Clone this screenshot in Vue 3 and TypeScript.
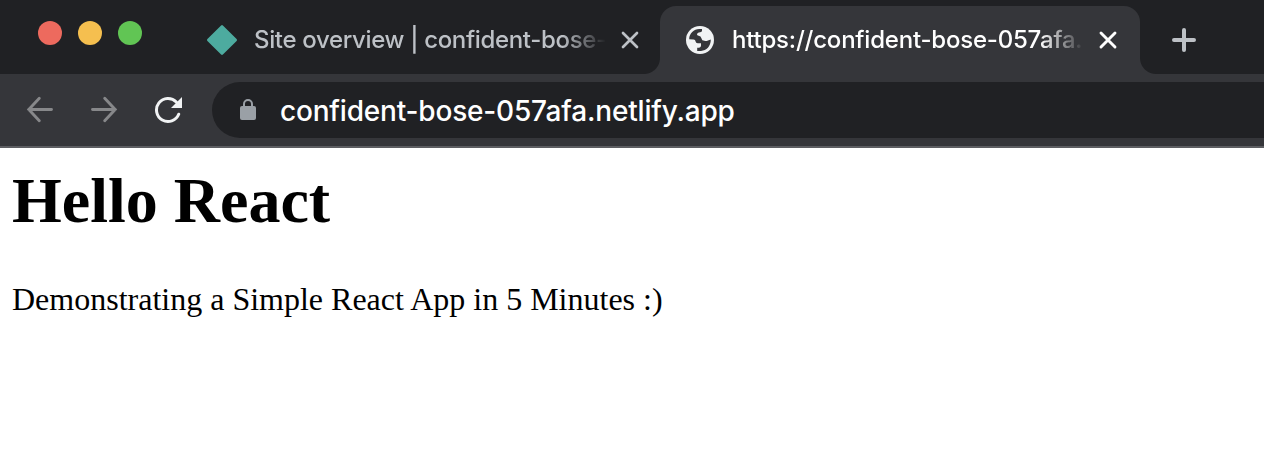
<script setup lang="ts">
const lights: string[] = ['red', 'yellow', 'green']
const address = 'confident-bose-057afa.netlify.app'
</script>

<template>
  <div class="window">
    <header class="strip">
      <div class="lights">
        <i v-for="light in lights" :key="light" class="light" :class="light"></i>
      </div>
      <div class="tab">
        <svg class="netlify" width="32" height="32" viewBox="0 0 32 32">
          <path d="M15.1 1.4Q16 .5 16.9 1.4L30.6 15.1Q31.5 16 30.6 16.9L16.9 30.6Q16 31.5 15.1 30.6L1.4 16.9Q.5 16 1.4 15.1Z" fill="#4dab9f" />
        </svg>
        <span class="title site">Site overview | confident-bose-</span>
        <svg class="close" width="20" height="20" viewBox="0 0 20 20">
          <path d="M3 3L17 17M17 3L3 17" stroke="#bdc1c6" stroke-width="2.7" stroke-linecap="round" />
        </svg>
      </div>
      <div class="tab active">
        <svg class="globe" width="28" height="28" viewBox="0 0 28 28">
          <circle cx="14" cy="14" r="14" fill="#f1f3f4" />
          <path d="M3.2 13.3C3.2 7.5 8 3.1 13.2 3.1H16V4.7Q16 6.1 14.2 6.2Q11 6.4 11 8.6Q11 9.7 12.6 9.7Q15 9.8 15.4 12.2Q15.8 14.7 18.4 14.8Q20 15.4 22 14.5L24.8 13.6C24.8 20.3 20.4 24.9 15 24.9H11.2V21.7H13.1Q15 21.5 15 19.8V17.2H11.7Q9.8 17.2 9.6 15.4Q9.4 13.6 7.6 13.5Z" fill="#35363a" />
        </svg>
        <span class="title current">https://confident-bose-057afa.</span>
        <svg class="close" width="20" height="20" viewBox="0 0 20 20">
          <path d="M3 3L17 17M17 3L3 17" stroke="#fff" stroke-width="2.9" stroke-linecap="round" />
        </svg>
      </div>
      <svg class="plus" width="24" height="24" viewBox="0 0 24 24">
        <path d="M2 12H22M12 2V22" stroke="#bdc1c6" stroke-width="4" stroke-linecap="round" />
      </svg>
    </header>
    <nav class="toolbar">
      <svg class="nav" width="28" height="28" viewBox="0 0 28 28">
        <path d="M25.5 13.5H2.8M13.3 2.3L2.8 13.5L13.3 24.7" />
      </svg>
      <svg class="nav" width="28" height="28" viewBox="0 0 28 28">
        <path d="M2.5 13.5H25.2M14.7 2.3L25.2 13.5L14.7 24.7" />
      </svg>
      <svg class="reload" width="28" height="28" viewBox="0 0 28 28">
        <path d="M24.7 18.2A11.5 11.5 0 1 1 22.3 6" fill="none" stroke="#f1f3f4" stroke-width="3" stroke-linecap="round" />
        <path d="M28 1V12H17Z" fill="#f1f3f4" />
      </svg>
      <div class="omnibox">
        <svg class="lock" width="16" height="22" viewBox="0 0 16 22">
          <path d="M4 8V5A4 4 0 0 1 12 5V8" fill="none" stroke="#9aa0a6" stroke-width="2" />
          <rect y="7" width="16" height="14" rx="2" fill="#9aa0a6" />
        </svg>
        <span class="address">{{ address }}</span>
      </div>
    </nav>
    <main class="page">
      <h1>Hello React</h1>
      <p>Demonstrating a Simple React App in 5 Minutes :)</p>
    </main>
  </div>
</template>

<style>
body { margin: 0; background: #fff; }
</style>

<style scoped>
.window { width: 1264px; height: 460px; overflow: hidden; background: #fff; font-family: Inter, "Liberation Sans", sans-serif; }
svg { display: block; flex: none; }
.strip { display: flex; height: 74px; background: #202124; }
.lights { display: flex; gap: 16px; box-sizing: border-box; width: 180px; padding: 21px 0 0 38px; }
.light { width: 24px; height: 24px; border-radius: 50%; }
.red { background: #ed6a5e; }
.yellow { background: #f5bf4f; }
.green { background: #61c554; }
.tab { display: flex; align-items: center; box-sizing: border-box; width: 480px; height: 68px; margin-top: 6px; padding: 0 20px 0 26px; color: #bdc1c6; }
.active { position: relative; padding-right: 22px; border-radius: 16px 16px 0 0; background: #35363a; color: #fff; }
.active::before, .active::after { content: ""; position: absolute; bottom: 0; width: 16px; height: 16px; }
.active::before { right: 100%; background: radial-gradient(circle at 0 0, transparent 15.5px, #35363a 16.5px); }
.active::after { left: 100%; background: radial-gradient(circle at 100% 0, transparent 15.5px, #35363a 16.5px); }
.title { flex: none; width: 352px; white-space: nowrap; font-size: 24px; font-weight: 500; line-height: 34px; mask-image: linear-gradient(90deg, #000 calc(100% - 44px), transparent); }
.site { margin-left: 16px; letter-spacing: -0.34px; }
.current { margin-left: 18px; letter-spacing: -0.21px; }
.close { margin-left: auto; }
.plus { margin: 28px 0 0 32px; }
.toolbar { display: flex; align-items: center; box-sizing: border-box; height: 74px; padding-left: 26px; border-bottom: 2px solid #5d5e62; background: #35363a; }
.nav { margin-right: 36px; fill: none; stroke: #87888a; stroke-width: 2.9; stroke-linecap: round; }
.omnibox { display: flex; flex: 1; align-items: center; height: 56px; margin-left: 30px; padding-left: 28px; border-radius: 28px 0 0 28px; background: #202124; color: #fff; }
.address { margin: 2px 0 0 24px; font-size: 28px; font-weight: 500; letter-spacing: -0.19px; line-height: 36px; white-space: nowrap; }
.page { padding: 16px 12px; color: #000; font-family: "Liberation Serif", serif; }
h1 { margin: 0; font-size: 64px; line-height: 73px; }
p { margin: 44px 0 0; font-size: 32px; line-height: 36px; }
</style>
